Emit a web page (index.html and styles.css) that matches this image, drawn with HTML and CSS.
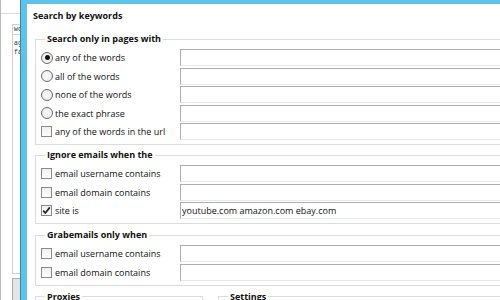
FILE: index.html
```html
<!DOCTYPE html>
<html>
<head>
<meta charset="utf-8">
<link rel="stylesheet" href="styles.css">
</head>
<body>
<div class="screen">
  <div class="bgwin">
    <div class="bg-topline"></div>
    <div class="bg-list">
      <div class="bg-head">wo</div>
      <div class="bg-item">ag</div>
      <div class="bg-item">fa</div>
    </div>
    <div class="bg-btn"></div>
  </div>
  <div class="dialog">
    <div class="title">Search by keywords</div>

    <fieldset class="group">
      <legend>Search only in pages with</legend>
      <div class="row"><span class="radio on"></span><span class="lbl">any of the words</span><input class="field" type="text"></div>
      <div class="row"><span class="radio"></span><span class="lbl">all of the words</span><input class="field" type="text"></div>
      <div class="row"><span class="radio"></span><span class="lbl">none of the words</span><input class="field" type="text"></div>
      <div class="row"><span class="radio"></span><span class="lbl">the exact phrase</span><input class="field" type="text"></div>
      <div class="row"><span class="check"></span><span class="lbl">any of the words in the url</span><input class="field" type="text"></div>
    </fieldset>

    <fieldset class="group">
      <legend>Ignore emails when the</legend>
      <div class="row"><span class="check"></span><span class="lbl">email username contains</span><input class="field" type="text"></div>
      <div class="row"><span class="check"></span><span class="lbl">email domain contains</span><input class="field" type="text"></div>
      <div class="row"><span class="check on"><svg viewBox="0 0 11 11" width="11" height="11"><path d="M2.2 5.6 L4.4 8 L8.8 2.4" fill="none" stroke="#222" stroke-width="1.7"/></svg></span><span class="lbl">site is</span><input class="field" type="text" value="youtube.com amazon.com ebay.com"></div>
    </fieldset>

    <fieldset class="group g3">
      <legend>Grabemails only when</legend>
      <div class="row"><span class="check"></span><span class="lbl">email username contains</span><input class="field" type="text"></div>
      <div class="row"><span class="check"></span><span class="lbl">email domain contains</span><input class="field" type="text"></div>
    </fieldset>

    <div class="bottom-groups">
      <fieldset class="group proxies"><legend>Proxies</legend></fieldset>
      <fieldset class="group settings"><legend>Settings</legend></fieldset>
    </div>
  </div>
</div>
</body>
</html>
```

FILE: styles.css
```css
html, body {
  margin: 0;
  padding: 0;
  width: 500px;
  height: 300px;
  overflow: hidden;
  background: #ffffff;
}

.screen {
  display: flex;
  width: 500px;
  height: 300px;
  overflow: hidden;
  font-family: "Open Sans", "Noto Sans", sans-serif;
  font-size: 9px;
  color: #111;
}

/* background window on the left */
.bgwin {
  flex: 0 0 21px;
  min-width: 0;
  overflow: hidden;
  display: flex;
  flex-direction: column;
  border-left: 1px solid #b9b9b9;
  background: #ffffff;
  box-sizing: border-box;
}
.bg-topline {
  height: 13px;
  border-bottom: 1px solid #dcdcdc;
  margin-right: 1px;
}
.bg-list {
  margin: 10px 0 0 11px;
  height: 248px;
  border: 1px solid #cfcfcf;
  border-right: none;
  font-family: "Liberation Mono", "DejaVu Sans Mono", monospace;
  font-size: 6.5px;
  line-height: 9px;
  color: #333;
  overflow: hidden;
  white-space: nowrap;
}
.bg-head {
  padding-left: 1px;
  border-bottom: 1px solid #d6d6d6;
  margin-bottom: 4px;
}
.bg-item {
  padding-left: 1px;
}
.bg-btn {
  margin: 4px 0 0 11px;
  flex: 1;
  background: #e5e5e5;
  border: 1px solid #adadad;
  border-right: none;
  border-bottom: none;
}

/* the dialog window */
.dialog {
  flex: 0 0 560px;
  box-sizing: border-box;
  border-left: 6px solid #5ec3e8;
  border-top: 4px solid #5ec3e8;
  box-shadow: -1px 0 0 #3f86aa;
  background: #ffffff;
  padding: 4px 0 0 0;
}

.title {
  font-weight: bold;
  font-size: 9px;
  line-height: 16px;
  padding-left: 6px;
  color: #111;
}

.group {
  margin: 7px 0 0 8px;
  padding: 2px 0 4px 5px;
  border: 1px solid #dcdcdc;
  min-width: 0;
}
.group + .group {
  margin-top: 2px;
}
.group.g3 {
  margin-top: 3px;
}
.group legend {
  font-weight: bold;
  font-size: 9px;
  line-height: 16px;
  margin-left: 4px;
  padding: 0 2px;
  color: #111;
}

.row {
  display: grid;
  grid-template-columns: 14px 125px 1fr;
  align-items: center;
  height: 17px;
  margin-bottom: 1.5px;
}
.row:last-child {
  margin-bottom: 0;
}

.lbl {
  white-space: nowrap;
  line-height: 17px;
}

.radio {
  width: 12px;
  height: 12px;
  box-sizing: border-box;
  border: 1px solid #6a6a6a;
  border-radius: 50%;
  background: radial-gradient(circle, #fbfbfb 0%, #e8e8e8 100%);
  position: relative;
}
.radio.on::after {
  content: "";
  position: absolute;
  left: 2.5px;
  top: 2.5px;
  width: 5px;
  height: 5px;
  border-radius: 50%;
  background: #111;
}

.check {
  width: 11px;
  height: 11px;
  box-sizing: border-box;
  border: 1px solid #8a8a8a;
  background: linear-gradient(#f0f0f0, #fdfdfd);
  display: flex;
}
.check svg {
  margin: -1px;
}

.field {
  height: 17px;
  box-sizing: border-box;
  margin: 0;
  padding: 0 1px;
  border: 1px solid #abadb3;
  border-bottom-color: #e3e9ef;
  border-right: none;
  border-radius: 0;
  outline: none;
  font-family: "Open Sans", "Noto Sans", sans-serif;
  font-size: 9px;
  color: #111;
  background: #fff;
  width: 100%;
}

.bottom-groups {
  display: flex;
  gap: 15px;
  margin-left: 8px;
}
.bottom-groups .group {
  margin: 3px 0 0 0;
  height: 40px;
}
.proxies {
  width: 168px;
  box-sizing: border-box;
}
.settings {
  flex: 1;
}
```
